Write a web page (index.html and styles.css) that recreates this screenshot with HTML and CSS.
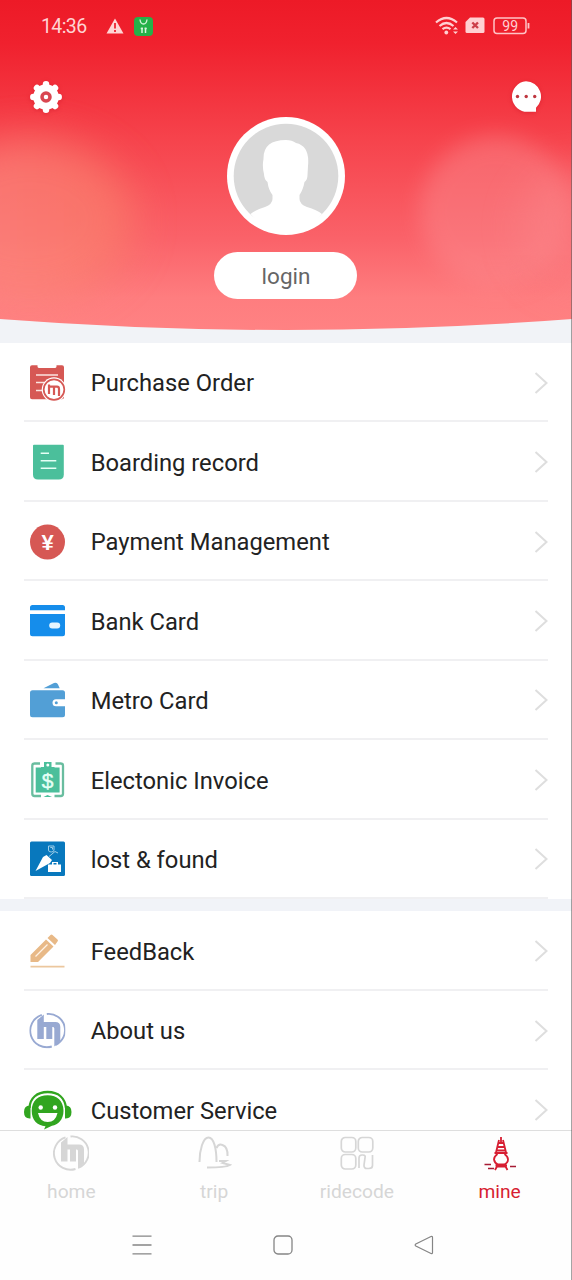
FILE: index.html
```html
<!DOCTYPE html>
<html lang="en">
<head>
<meta charset="utf-8">
<title>Mine</title>
<link rel="stylesheet" href="styles.css">
</head>
<body>
<svg class="defs" width="0" height="0" aria-hidden="true">
  <symbol id="metro" viewBox="0 0 36 36">
    <path d="M12.500 2.400A16.300 16.300 0 0 0 22.500 34M17.500 1.500A16.300 16.300 0 0 1 26 32.600" fill="none" stroke="currentColor" stroke-width="1.900"/>
    <path d="M8 7.500L14.500 2V9.500H26Q31 9.500 31 14.500V28.500L25 34V16Q25 14.500 23.800 14.500H23V26.500H17V14.500H14.500V26.500H8Z" fill="currentColor"/>
  </symbol>
  <symbol id="chevron" viewBox="0 0 14 22"><path d="M1.500 1L12.500 11L1.500 21" fill="none" stroke="#dedede" stroke-width="2"/></symbol>
</svg>
<div class="screen">
  <header class="hero">
    <svg class="hero-bg" viewBox="0 0 572 343">
      <defs>
        <linearGradient id="red" x1="0" y1="0" x2="0" y2="1">
          <stop offset="0" stop-color="#ed1a27"/><stop offset=".13" stop-color="#f0212e"/><stop offset=".42" stop-color="#f6434c"/><stop offset=".72" stop-color="#fa6269"/><stop offset=".9" stop-color="#fe7d7f"/><stop offset="1" stop-color="#ff8283"/>
        </linearGradient>
        <linearGradient id="glow" x1="0" y1="0" x2="1" y2="0">
          <stop offset="0" stop-color="#fd9089"/><stop offset="1" stop-color="#f98069"/>
        </linearGradient>
        <filter id="soft" x="-50%" y="-50%" width="200%" height="200%"><feGaussianBlur stdDeviation="20"/></filter>
        <filter id="soft2" x="-50%" y="-50%" width="200%" height="200%"><feGaussianBlur stdDeviation="11"/></filter>
        <clipPath id="curve"><path d="M0 0H572V319Q286 341 0 319Z"/></clipPath>
      </defs>
      <rect width="572" height="343" fill="#f1f3f7"/>
      <g clip-path="url(#curve)">
        <rect width="572" height="331" fill="url(#red)"/>
        <ellipse cx="30" cy="220" rx="105" ry="82" fill="url(#glow)" opacity=".64" filter="url(#soft)"/>
        <circle cx="496" cy="212" r="76" fill="#fb8c90" opacity=".46" filter="url(#soft2)"/>
        <circle cx="580" cy="227" r="62" fill="#fb8a8e" opacity=".4" filter="url(#soft)"/>
      </g>
    </svg>
    <div class="status">
      <span class="clock">14:36</span>
      <svg class="warn" width="18" height="16" viewBox="0 0 18 16"><path d="M9 .5L17.500 15.500H.5Z" fill="#ffd5d5"/><path d="M9 5V10.500M9 12V14" stroke="#ef3540" stroke-width="2"/></svg>
      <svg class="app" width="19" height="19" viewBox="0 0 19 19"><rect width="19" height="19" rx="4" fill="#25b149"/><path d="M6 2.500Q6.500 7 9.500 7T13 2.500" fill="none" stroke="#d8f4dc" stroke-width="1.300"/><path d="M8 10.500V16M11.500 10.500V16M6.700 11.500H9M10.500 11.500H12.800" stroke="#d8f4dc" stroke-width="1.500"/></svg>
      <svg class="signals" width="96" height="20" viewBox="0 0 96 20">
        <g fill="none" stroke="#ffd0d2" stroke-width="2.200"><path d="M1 6.500Q11.500-2.500 22 6.500M4.500 10Q11.500 4 18.500 10M7.500 13.200Q11.500 10 15.500 13.200"/></g>
        <circle cx="11.300" cy="16.500" r="1.900" fill="#ffd0d2"/><path d="M18 13.500L20.500 11L23 13.500ZM18 15.500L20.500 18L23 15.500Z" fill="#ffd0d2"/>
        <path d="M35 1.500H48Q49.500 1.500 49.500 3V15.500Q49.500 17 48 17H32Q30.500 17 30.500 15.500V6Z" fill="#ffd0d2"/><path d="M37.300 6.500L43 12M43 6.500L37.300 12" stroke="#cc3e49" stroke-width="2.400"/>
        <rect x="59" y="2" width="32" height="15.500" rx="3" fill="none" stroke="#ffc3c6" stroke-width="1.500"/><path d="M93.500 7V12.500" stroke="#ffc3c6" stroke-width="1.800"/>
        <text x="75.200" y="14.500" text-anchor="middle" class="pct">99</text>
      </svg>
    </div>
    <div class="actions">
      <svg class="gear" width="34" height="34" viewBox="-17 -17 34 34"><circle r="12.800" fill="#fff"/><g stroke="#fff" stroke-width="6.500" stroke-linecap="round"><path d="M0-12.700V12.700M-12.700 0H12.700M-9-9L9 9M9-9L-9 9"/></g><circle r="4" fill="#fff" stroke="#d94650" stroke-width="3.500"/></svg>
      <svg class="chat" width="32" height="32" viewBox="0 0 32 32"><path d="M16 .3A15.200 15.200 0 1 0 18.500 30.700H26V26.800A15.200 15.200 0 0 0 16 .3Z" fill="#fff"/><g fill="#bf3740"><circle cx="7.500" cy="15.500" r="1.700"/><circle cx="16.200" cy="15.500" r="1.700"/><circle cx="24.700" cy="15.500" r="1.700"/></g></svg>
    </div>
    <div class="profile">
      <svg class="avatar" width="118" height="118" viewBox="0 0 118 118"><circle cx="59" cy="59" r="59" fill="#fff"/><circle cx="59" cy="59" r="52.300" fill="#d9d9d9"/><path d="M23.500 97Q28 93 38 90Q45.500 87 45.500 82V78Q41.500 73 40.500 65Q37 62 37 57Q35 49 36.500 42Q36 23 59 23Q65 23 69 26Q83 29 81 49L80.500 58Q80.500 63 77.500 65Q76 73 72.500 78V82Q72.500 87 80 90Q90 93 95 97A47 47 0 0 1 23.500 97Z" fill="#fff"/></svg>
      <div class="login">login</div>
    </div>
  </header>
  <main class="lists">
    <section class="group">
      <div class="row"><svg class="icon" viewBox="0 0 48 48"><path d="M8 6.300H13.500V7.500Q13.500 9 15.500 9H30.500Q32.500 9 32.500 7.500V6.300H38Q40 6.300 40 8.300V38.300Q40 40.300 38 40.300H8Q6 40.300 6 38.300V8.300Q6 6.300 8 6.300Z" fill="#d65854"/><path d="M12 16H34M12 23.500H22M12 31.500H18" stroke="#fbe4e0" stroke-width="1.500"/><circle cx="30" cy="30.600" r="12.300" fill="#fff"/><circle cx="30" cy="30.600" r="10.300" fill="#fff" stroke="#d65854" stroke-width="1.700"/><path d="M25 25.500V35M25 27.700H33Q35 27.700 35 30V37M30 28V36" fill="none" stroke="#d65854" stroke-width="2.200"/></svg><span class="label">Purchase Order</span><svg class="go"><use href="#chevron"/></svg></div>
      <div class="row"><svg class="icon" viewBox="0 0 48 48"><path d="M10 6.700H38.800Q39.800 6.700 39.800 7.700V36.500Q39.800 41.500 34.800 41.500H14Q9 41.500 9 36.500V7.700Q9 6.700 10 6.700Z" fill="#4bbf9b"/><path d="M16.700 15.200H25M16.700 22.700H32.300M16.700 30.300H32.300" stroke="#e5fff5" stroke-width="1.500"/></svg><span class="label">Boarding record</span><svg class="go"><use href="#chevron"/></svg></div>
      <div class="row"><svg class="icon" viewBox="0 0 48 48"><circle cx="23.500" cy="24" r="17.500" fill="#d65854"/><text x="23.500" y="31.500" text-anchor="middle" class="yen">¥</text></svg><span class="label">Payment Management</span><svg class="go"><use href="#chevron"/></svg></div>
      <div class="row"><svg class="icon" viewBox="0 0 48 48"><path d="M6 13.300V10.500Q6 8 8.500 8H38.500Q41 8 41 10.500V13.300ZM6 17H41V36.800Q41 39.300 38.500 39.300H8.500Q6 39.300 6 36.800Z" fill="#158deb"/><rect x="25.200" y="25.500" width="11" height="6" rx="3" fill="#e5f5ff"/></svg><span class="label">Bank Card</span><svg class="go"><use href="#chevron"/></svg></div>
      <div class="row"><svg class="icon" viewBox="0 0 48 48"><rect x="6" y="14.300" width="35" height="26.900" rx="2.500" fill="#529fd6"/><path d="M19.500 12.300L30 7Q33 6 34 8.500L35.700 12.300Z" fill="#529fd6"/><path d="M41 23.300H32A3.500 3.500 0 0 0 32 30.300H41Z" fill="#fff"/><circle cx="32.300" cy="26.800" r="1.500" fill="#529fd6"/></svg><span class="label">Metro Card</span><svg class="go"><use href="#chevron"/></svg></div>
      <div class="row"><svg class="icon" viewBox="0 0 48 48"><path d="M16 7.500H10.500Q8.300 7.500 8.300 9.700V37.700Q8.300 40 10.500 40H17M31.500 7.500H36.800Q39 7.500 39 9.700V37.700Q39 40 36.800 40H30.500" fill="none" stroke="#69bd9f" stroke-width="2.300"/><path d="M20 6H27.500V11H30.500V11.500H35.600V36.500H11.700V11.500H17V11H20ZM19.500 41L23.500 39L28 41Z" fill="#4bbf9b"/><circle cx="23.800" cy="9" r="1.500" fill="#fff"/><text x="23.500" y="31.500" text-anchor="middle" class="dollar">$</text></svg><span class="label">Electonic Invoice</span><svg class="go"><use href="#chevron"/></svg></div>
      <div class="row"><svg class="icon" viewBox="0 0 48 48"><rect x="6" y="6.500" width="35" height="34.500" rx="1.500" fill="#0878bd"/><path d="M11.500 36L19 22L22.500 20L28 25L26 28ZM24 29.500H28V27H34V29.500H37V37H24Z" fill="#fff"/><path d="M29.500 28H32.500V29.500H29.500Z" fill="#0878bd"/><path d="M25 21.500L31 16.500L34 18M24.500 11H30V15Q30 17 27.200 17T24.500 15ZM26.300 12.500H28.500V14.500" fill="none" stroke="#9fcee8" stroke-width="1"/></svg><span class="label">lost &amp; found</span><svg class="go"><use href="#chevron"/></svg></div>
    </section>
    <section class="group">
      <div class="row"><svg class="icon" viewBox="0 0 48 48"><path d="M6.500 35V28L22 12.500L29.500 19.500L14 35ZM23.500 11L26.500 8Q27.500 7 28.500 8L33.500 12.500Q34.500 13.500 33.500 14.500L31 18Z" fill="#e8b987"/><path d="M11.500 29.500L23.500 17.500" stroke="#fff3e5" stroke-width="1.200"/><path d="M6.500 39.700H40.500" stroke="#ecc79e" stroke-width="1.700"/></svg><span class="label">FeedBack</span><svg class="go"><use href="#chevron"/></svg></div>
      <div class="row"><svg class="icon about" viewBox="0 0 48 48"><use href="#metro" x="5.300" y="5.500" width="36" height="36"/></svg><span class="label">About us</span><svg class="go"><use href="#chevron"/></svg></div>
      <div class="row"><svg class="icon" viewBox="0 0 48 48"><path d="M5.500 22C6 12 13 6 23.700 6S41 12 42 22" fill="none" stroke="#31a51f" stroke-width="2.300"/><path d="M6.500 19.500V32.500Q0 33 0 26T6.500 19.500ZM41 19.500V32.500Q47.500 33 47.500 26T41 19.500Z" fill="#31a51f"/><path d="M23.700 9.200C33 9.200 39.500 15 39.500 24.700C39.500 34 34 38.500 28 39.800L20 43.500L21.500 40.200C13 39.500 7.700 34 7.700 24.700C7.700 15 14 9.200 23.700 9.200Z" fill="#31a51f"/><circle cx="16.700" cy="21.500" r="2.200" fill="#fff"/><circle cx="31" cy="21.500" r="2.200" fill="#fff"/><path d="M14 27H33.500Q31.500 36 23.700 36T14 27Z" fill="#fff"/></svg><span class="label">Customer Service</span><svg class="go"><use href="#chevron"/></svg></div>
    </section>
  </main>
  <nav class="tabs">
    <div class="tab"><svg class="tab-icon" viewBox="0 0 36 36"><use href="#metro" width="36" height="36"/></svg><span>home</span></div>
    <div class="tab"><svg class="tab-icon" viewBox="0 0 36 36"><path d="M3.500 27C3.500 15 7 2.500 12.500 2.500S20.500 14 20.500 27M20.500 13C22 9.500 24 9 26.500 10Q32 12 31.500 21" fill="none" stroke="currentColor" stroke-width="2"/><path d="M23 26H30L26.500 28L34 30Q30 32.500 11 32.500" fill="none" stroke="currentColor" stroke-width="1.900"/></svg><span>trip</span></div>
    <div class="tab"><svg class="tab-icon" viewBox="0 0 36 36"><g fill="none" stroke="currentColor" stroke-width="1.700"><rect x="2.300" y="2.500" width="14.500" height="14.500" rx="4"/><rect x="19.300" y="2.500" width="14.500" height="14.500" rx="4"/><rect x="2.300" y="19.500" width="14.500" height="14.500" rx="4"/><path d="M20 33V23Q20 20 23 20H24Q26.800 20 26 23L25 30Q24.800 33.500 28 33.500H30Q33.500 33.500 33.500 30.500V20"/></g></svg><span>ridecode</span></div>
    <div class="tab active"><svg class="tab-icon" viewBox="0 0 36 36"><path d="M19 2V7M16.500 8H21.500M15.500 12H22.500M14.500 15.500H23.500M17 5L14 17.500M21 5L24 17.500M12.500 18H25.500M15.500 19Q12 21.500 12 24.500Q12.500 28 16 29.500H22Q26 28 26 24.500Q26 21.500 22.500 19M13.500 30.500H25M13 35L15 31.500H23.500L25.500 35" fill="none" stroke="currentColor" stroke-width="1.800"/><path d="M2.500 29.500H9M6 33.500H12M28 31.500H34" stroke="#a71c35" stroke-width="1.500"/></svg><span>mine</span></div>
  </nav>
  <footer class="system">
    <svg width="20" height="20" viewBox="0 0 20 20"><path d="M.5 1.200H19.500M.5 10H19.500M.5 18.800H19.500" stroke="#858585" stroke-width="1.300"/></svg>
    <svg width="20" height="20" viewBox="0 0 20 20"><rect x="1" y="1" width="18" height="18" rx="4" fill="none" stroke="#858585" stroke-width="1.300"/></svg>
    <svg width="20" height="20" viewBox="0 0 20 20"><path d="M1.800 9Q.5 10 1.800 11L17 18.500Q18.500 19 18.500 17.500V2.500Q18.500 1 17 1.500Z" fill="none" stroke="#858585" stroke-width="1.200"/></svg>
  </footer>
</div>
</body>
</html>
```
FILE: styles.css
```css
* { box-sizing: border-box; }
body { margin: 0; font-family: Roboto, "Liberation Sans", sans-serif; background: #fff; }
.defs { position: absolute; }
.screen { position: relative; width: 572px; height: 1280px; overflow: hidden; display: flex; flex-direction: column; background: #fefefe; }
.screen::after { content: ""; position: absolute; inset: 0 0 0 auto; width: 1px; background: rgba(90, 90, 90, .55); }
.hero { position: relative; height: 343px; flex: none; display: flex; flex-direction: column; }
.hero-bg { position: absolute; inset: 0; width: 572px; height: 343px; }
.status { position: relative; display: flex; align-items: center; height: 52px; padding: 0 41px 0 41px; }
.clock { width: 65px; font-size: 19.500px; letter-spacing: -.6px; color: #ffd3d3; }
.app { margin-left: 10px; }
.signals { margin-left: auto; }
.pct { font: 14px Roboto, sans-serif; fill: #ffd0d2; }
.actions { position: relative; display: flex; justify-content: space-between; align-items: center; height: 64px; padding: 26px 30px 0 29px; }
.actions svg { filter: drop-shadow(0 1px 2px rgba(180, 0, 20, .3)); }
.profile { position: relative; display: flex; flex-direction: column; align-items: center; gap: 17px; padding: 1px 1px 0 0; }
.login { width: 143px; height: 47px; border-radius: 24px; background: #fff; color: #666; font-size: 22.500px; line-height: 49px; text-align: center; padding-left: 1px; }
.lists { height: 787px; flex: none; overflow: hidden; background: #f1f3f8; display: flex; flex-direction: column; gap: 12.500px; }
.group { flex: none; background: #fff; }
.row { height: 79.430px; margin: 0 24px; display: flex; align-items: center; border-bottom: 2px solid #f0f0f2; }
.icon { width: 48px; height: 48px; flex: none; position: relative; top: 1px; }
.about { color: #98a9d2; }
.label { flex: 1; margin-left: 18.700px; padding-top: 3.500px; font-size: 23.750px; color: #222; }
.go { width: 14px; height: 22px; position: relative; top: 1px; }
.yen { font: bold 22px "Liberation Sans", sans-serif; fill: #fff; }
.dollar { font: 21px "Liberation Sans", sans-serif; fill: #e5fff5; stroke: #e5fff5; stroke-width: .4px; }
.tabs { height: 80px; flex: none; display: flex; border-top: 1px solid #dedede; background: #fefefe; padding-right: 1px; }
.tab { flex: 1; display: flex; flex-direction: column; align-items: center; padding-top: 4px; gap: 9px; font-size: 19.200px; line-height: 24px; color: #d6d6d6; }
.tab-icon { width: 36px; height: 36px; }
.active { color: #d71e32; }
.system { height: 70px; display: flex; align-items: center; gap: 121px; padding-left: 131.500px; }
```
